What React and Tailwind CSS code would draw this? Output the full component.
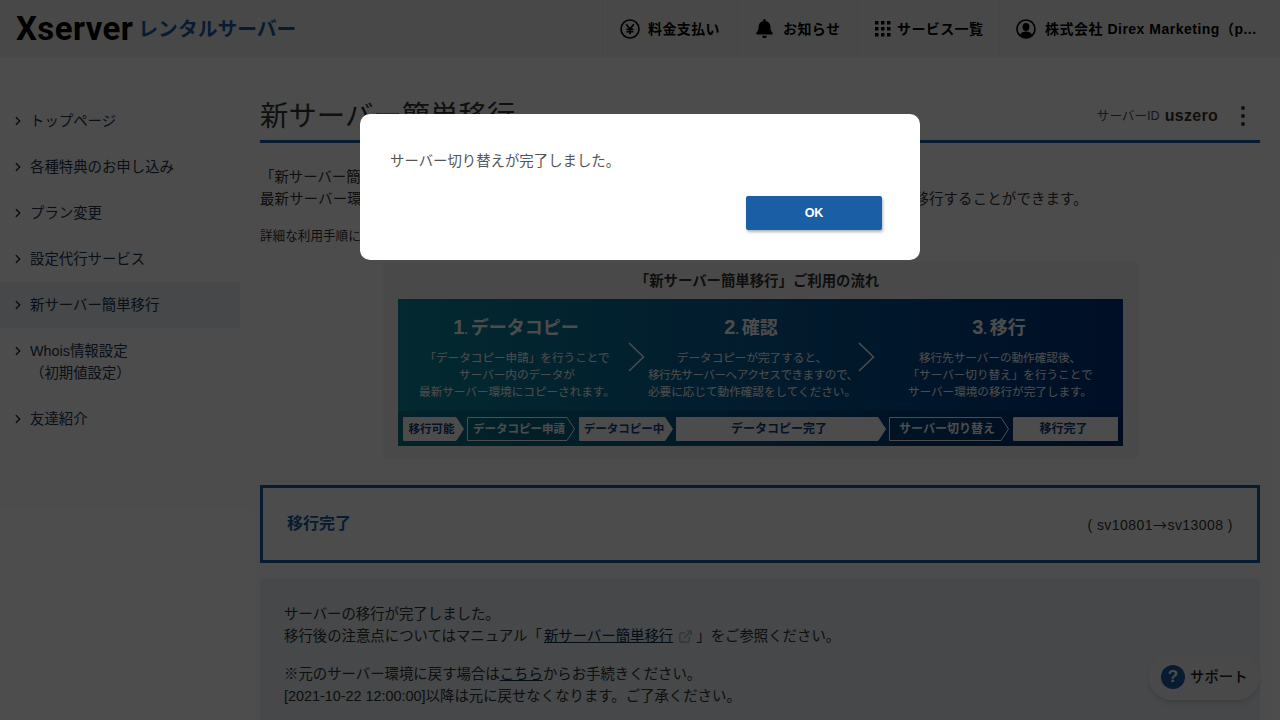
import React from 'react';
import { ChevronRight, ExternalLink } from 'lucide-react';
import { FaBell } from 'react-icons/fa';

const sideItems = [
  { label: 'トップページ' },
  { label: '各種特典のお申し込み' },
  { label: 'プラン変更' },
  { label: '設定代行サービス' },
  { label: '新サーバー簡単移行', active: true },
  { label: 'Whois情報設定', sub: '（初期値設定）' },
  { label: '友達紹介' },
];

const steps = [
  {
    num: '1',
    title: 'データコピー',
    width: 'w-[226px]',
    lines: ['「データコピー申請」を行うことで', 'サーバー内のデータが', '最新サーバー環境にコピーされます。'],
  },
  {
    num: '2',
    title: '確認',
    width: 'w-[212px] pr-1',
    lines: ['データコピーが完了すると、', '移行先サーバーへアクセスできますので、', '必要に応じて動作確認をしてください。'],
  },
  {
    num: '3',
    title: '移行',
    width: 'w-[244px]',
    lines: ['移行先サーバーの動作確認後、', '「サーバー切り替え」を行うことで', 'サーバー環境の移行が完了します。'],
  },
];

const flags = [
  { label: '移行可能', w: 61, size: 'text-[11.500px]', mr: 'mr-[3px]' },
  { label: 'データコピー申請', w: 108, size: 'text-[11.500px]', outline: true, mr: 'mr-[4px]' },
  { label: 'データコピー中', w: 94, size: 'text-[11.500px]', mr: 'mr-[3px]' },
  { label: 'データコピー完了', w: 210, size: 'text-[12px]', mr: 'mr-[3px]' },
  { label: 'サーバー切り替え', w: 120, size: 'text-[12px]', outline: true, mr: 'mr-[4px]' },
  { label: '移行完了', w: 105, size: 'text-[12px]', square: true, mr: '' },
];

const YenIcon = () => (
  <svg width="20" height="20" viewBox="0 0 20 20" fill="none" stroke="#000" strokeWidth="1.6">
    <circle cx="10" cy="10" r="9" />
    <path d="M6.2 5.2 10 10l3.8-4.8M10 10v5.2M6.5 10.2h7M6.5 12.6h7" />
  </svg>
);

const GridIcon = () => (
  <svg width="16" height="16" viewBox="0 0 16 16" fill="#000">
    {[0, 6, 12].map((y) =>
      [0, 6, 12].map((x) => <rect key={`${x}-${y}`} x={x} y={y} width="3.5" height="3.5" />)
    )}
  </svg>
);

const UserIcon = () => (
  <svg width="20" height="20" viewBox="0 0 20 20">
    <circle cx="10" cy="10" r="9" fill="none" stroke="#000" strokeWidth="1.6" />
    <ellipse cx="10" cy="8" rx="3.4" ry="4" fill="#000" />
    <path d="M3.8 16c1-2.6 3.4-3.6 6.2-3.6s5.200 1 6.200 3.600A8.600 8.600 0 0 1 10 19a8.600 8.600 0 0 1-6.200-3z" fill="#000" />
  </svg>
);

const NavItem = ({ icon, label, className }) => (
  <div className={`flex items-center border-l border-[#e6e6e6] h-full ${className}`}>
    {icon}
    <span className="font-bold text-[14px] tracking-[0.4px] text-black whitespace-nowrap">{label}</span>
  </div>
);

const Flag = ({ label, w, size, outline, square, mr }) => {
  const tip = square ? w : w - 8;
  const pts = `0.5,0.5 ${tip},0.5 ${w - 0.5},12 ${tip},23.5 0.5,23.5`;
  return (
    <div className={`relative h-6 shrink-0 flex items-center justify-center ${mr}`} style={{ width: w }}>
      <svg className="absolute inset-0" width={w} height="24" viewBox={`0 0 ${w} 24`}>
        <polygon points={pts} fill={outline ? 'none' : '#fff'} stroke="#fff" strokeWidth="1" />
      </svg>
      <span className={`relative font-bold ${size} whitespace-nowrap pr-1 ${outline ? 'text-white' : 'text-[#12407e]'}`}>
        {label}
      </span>
    </div>
  );
};

const FlowChart = () => (
  <div className="w-[725px] h-[147px] flex flex-col bg-gradient-to-r from-[#0e8aa0] via-[#0a5c98] to-[#00327e]">
    <div className="h-[112px] flex items-start pl-[6px]">
      {steps.map((s, i) => (
        <React.Fragment key={s.num}>
          <div className={`${s.width} shrink-0 text-center text-white pt-[14px]`}>
            <div className="font-bold text-[18px] leading-[28px] mb-[5px] pr-[2px]">
              <span className="text-[20px]">{s.num}</span>
              <span className="text-[12px] mr-[3px]">.</span>
              {s.title}
            </div>
            {s.lines.map((l) => (
              <div key={l} className={`text-[11.600px] leading-[17px] whitespace-nowrap ${l.length > 18 ? 'tracking-[-0.5px]' : ''}`}>
                {l}
              </div>
            ))}
          </div>
          {i < 2 && (
            <svg className="mt-[43px] shrink-0 -ml-[2px] mr-[2px]" width="18" height="30" viewBox="0 0 18 30" fill="none" stroke="#fff" strokeWidth="1.500">
              <path d="M1 1 15.500 15 1 29" />
            </svg>
          )}
        </React.Fragment>
      ))}
    </div>
    <div className="h-[35px] flex items-center pl-[5px] bg-[#00000022]">
      {flags.map((f) => (
        <Flag key={f.label} {...f} />
      ))}
    </div>
  </div>
);

export default function App() {
  return (
    <div className="relative h-[720px] overflow-hidden bg-white text-[#333] text-[14.400px] leading-[22px] font-['Liberation_Sans','Noto_Sans_CJK_JP',sans-serif]">
      <header className="h-[57px] bg-[#f2f2f2] flex items-center justify-between">
        <div className="flex items-center pl-4 whitespace-nowrap">
          <span className="font-['Roboto',sans-serif] font-bold text-[33px] leading-none text-black tracking-[0.4px]">Xserver</span>
          <span className="font-bold text-[19.800px] leading-none text-[#1a5fa5] ml-[5px] mt-[3px]">レンタルサーバー</span>
        </div>
        <nav className="flex h-full">
          <NavItem className="w-[135px] pl-[17px] gap-2" icon={<YenIcon />} label="料金支払い" />
          <NavItem className="w-[120px] pl-[17px] gap-[9px]" icon={<FaBell size={19} color="#000" />} label="お知らせ" />
          <NavItem className="w-[142px] pl-[17px] gap-[6px]" icon={<GridIcon />} label="サービス一覧" />
          <div className="w-[281px] flex items-center border-l border-[#e6e6e6] pl-[16px] gap-[9px]">
            <UserIcon />
            <span className="font-bold text-[14px] tracking-[0.5px] text-black whitespace-nowrap">
              株式会社 Direx Marketing（p...
            </span>
          </div>
        </nav>
      </header>

      <div className="flex">
        <aside className="w-60 shrink-0 pt-[41px]">
          {sideItems.map((item) => (
            <div key={item.label} className={`flex py-3 pl-[11px] ${item.active ? 'bg-[#e9f0f5]' : ''}`}>
              <ChevronRight size={14} strokeWidth={2.2} className="mt-1 shrink-0 text-[#222]" />
              <div className="ml-[5px] text-[#1f3550]">
                {item.label}
                {item.sub && <div>{item.sub}</div>}
              </div>
            </div>
          ))}
        </aside>

        <main className="w-[1000px] ml-5">
          <div className="h-[47px] mt-[39px] flex items-start justify-between border-b-[3px] border-[#1a5fa5]">
            <h1 className="text-[28.400px] leading-[40px] text-[#333] whitespace-nowrap">新サーバー簡単移行</h1>
            <div className="flex items-center mt-[9px] text-[#555] whitespace-nowrap">
              <span className="text-[12.600px]">サーバーID</span>
              <span className="font-bold text-[16px] text-[#333] ml-[5px] tracking-[0.3px]">uszero</span>
              <div className="flex flex-col gap-[4px] ml-[23px] mr-[15px]">
                <span className="w-1 h-1 rounded-full bg-[#333]"></span>
                <span className="w-1 h-1 rounded-full bg-[#333]"></span>
                <span className="w-1 h-1 rounded-full bg-[#333]"></span>
              </div>
            </div>
          </div>

          <p className="mt-[23px] whitespace-nowrap">「新サーバー簡単移行」は、サーバーアカウントのデータを最新のサーバー環境へ移行する機能です。</p>
          <p className="whitespace-nowrap tracking-[0.18px]">最新サーバー環境の高速性能を活かすために、お使いのサーバーアカウントのデータを一括で簡単に移行することができます。</p>
          <p className="mt-[15px] text-[12.600px] whitespace-nowrap">詳細な利用手順については、マニュアルをご確認ください。</p>

          <div className="ml-[123px] mt-[15px] w-[755px] h-[196px] bg-[#f5f5f5] flex flex-col items-center pt-[8px]">
            <div className="font-bold text-[14.400px] leading-[22px] mb-[7px] pr-[7px]">「新サーバー簡単移行」ご利用の流れ</div>
            <FlowChart />
          </div>

          <div className="mt-[27px] h-[78px] border-[3px] border-[#1a5fa5] flex items-center justify-between pl-6 pr-6">
            <span className="font-bold text-[16px] text-[#1a5fa5]">移行完了</span>
            <span className="text-[14px] tracking-[0.45px] text-[#333]">
              ( sv10801<span className="font-['Noto_Sans_CJK_JP',sans-serif]">→</span>sv13008 )
            </span>
          </div>

          <div className="mt-4 h-[200px] bg-[#e9f0f5] px-6 pt-6">
            <p>サーバーの移行が完了しました。</p>
            <p className="flex items-center">
              移行後の注意点についてはマニュアル「
              <span className="underline text-[#12304f] ml-[2px]">新サーバー簡単移行</span>
              <ExternalLink size={15} className="ml-[5px] mr-[3px] text-[#aaa]" />
              」をご参照ください。
            </p>
            <p className="mt-4">
              ※元のサーバー環境に戻す場合は<span className="underline text-[#12304f]">こちら</span>からお手続きください。
            </p>
            <p>[2021-10-22 12:00:00]以降は元に戻せなくなります。ご了承ください。</p>
          </div>
        </main>
      </div>

      <div className="absolute right-5 top-[654px] w-[111px] h-[46px] rounded-full bg-[#f5f5f5] shadow-md flex items-center pl-3 gap-[5px]">
        <span className="w-6 h-6 rounded-full bg-[#1a5fa5] text-white font-bold text-[17px] leading-6 text-center">?</span>
        <span className="font-medium text-[14.400px] text-[#222]">サポート</span>
      </div>

      <div className="absolute inset-0 bg-black/70"></div>

      <div className="absolute left-[360px] top-[114px] w-[560px] h-[146px] bg-white rounded-[10px] px-[30px] pt-[36px]">
        <p className="text-[#555]">サーバー切り替えが完了しました。</p>
        <div className="flex justify-end mt-[24px] mr-[8px]">
          <button className="w-[136px] h-[34px] bg-[#1a5fa5] rounded-[2px] text-white font-bold text-[12.500px] shadow-[1px_2px_3px_rgba(0,0,0,0.3)]">
            OK
          </button>
        </div>
      </div>
    </div>
  );
}
